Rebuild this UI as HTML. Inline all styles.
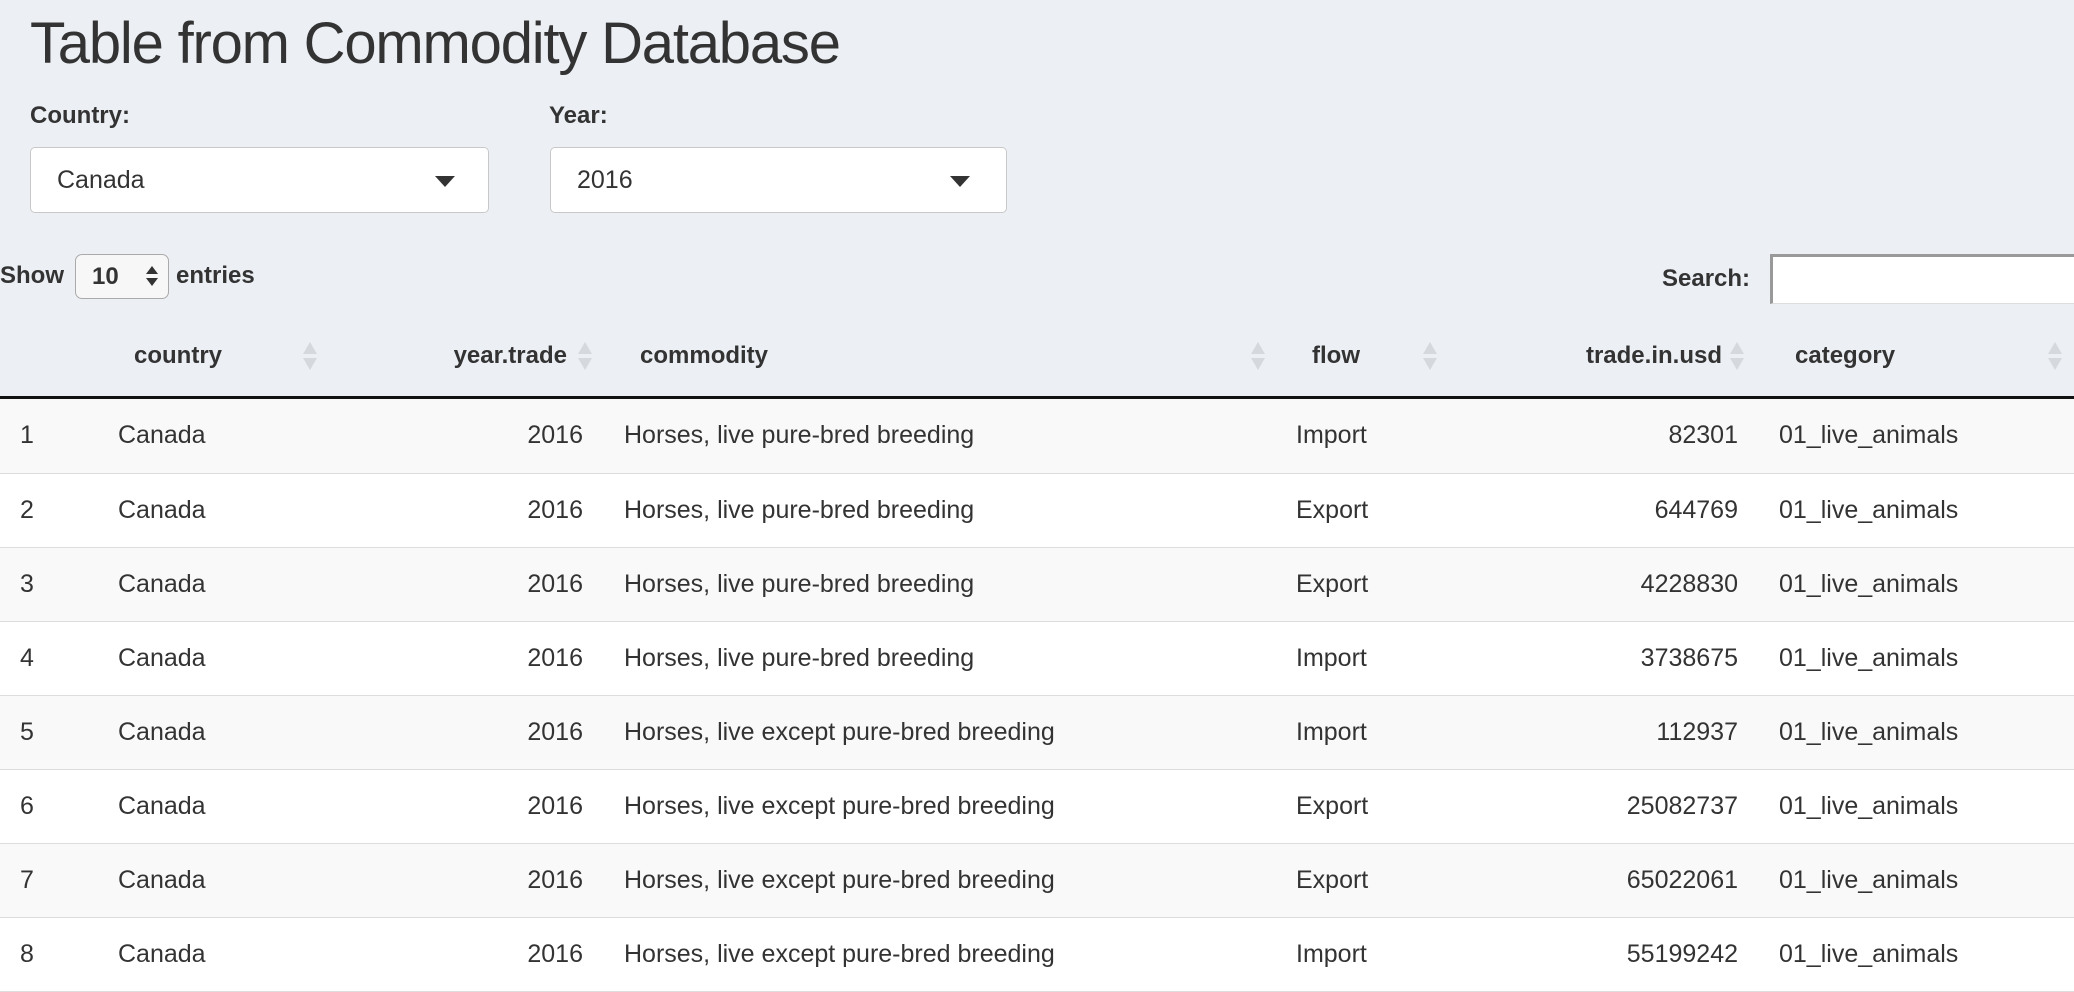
<!DOCTYPE html>
<html><head><meta charset="utf-8"><style>
*{box-sizing:border-box;margin:0;padding:0}
body{width:2074px;height:992px;overflow:hidden;background:#ecf0f5;font-family:"Liberation Sans",sans-serif;color:#333;position:relative}
.a{position:absolute;white-space:nowrap}
h1{position:absolute;left:30px;top:8px;font-size:58px;font-weight:normal;letter-spacing:-1.2px;color:#333;line-height:72px}
.lbl{font-weight:bold;font-size:24px}
.sel{position:absolute;background:#fff;border:1px solid #c8c8c8;border-radius:5px;height:66px;top:147px}
.sel span{position:absolute;left:26px;top:18px;font-size:25px}
.tri{position:absolute;top:28px;width:0;height:0;border-left:10px solid transparent;border-right:10px solid transparent;border-top:11px solid #333}
.srt{position:absolute;top:342px;width:14px;height:30px}
.srt:before{content:"";position:absolute;left:0;top:0;border-left:7px solid transparent;border-right:7px solid transparent;border-bottom:12px solid #d5d8dc}
.srt:after{content:"";position:absolute;left:0;top:16px;border-left:7px solid transparent;border-right:7px solid transparent;border-top:12px solid #d5d8dc}
.hd{position:absolute;top:340px;font-weight:bold;font-size:24px;line-height:32px}
table{position:absolute;left:0;top:399px;width:2074px;border-collapse:collapse;table-layout:fixed;font-size:25px}
td{height:74px;border-bottom:1px solid #ddd;padding:0;white-space:nowrap}
tr:nth-child(odd){background:#f9f9f9}
tr:nth-child(even){background:#fff}
.r{text-align:right}
</style></head><body>
<h1>Table from Commodity Database</h1>
<div class="a lbl" style="left:30px;top:102px">Country:</div>
<div class="a lbl" style="left:549px;top:102px">Year:</div>
<div class="sel" style="left:30px;width:459px"><span>Canada</span><div class="tri" style="left:404px"></div></div>
<div class="sel" style="left:550px;width:457px"><span>2016</span><div class="tri" style="left:399px"></div></div>

<div class="a lbl" style="left:0;top:262px">Show</div>
<div class="a" style="left:75px;top:254px;width:94px;height:45px;background:#f7f7f7;border:1px solid #aaa;border-radius:7px;font-size:24px;font-weight:bold">
<span style="position:absolute;left:16px;top:8px">10</span>
<span style="position:absolute;left:70px;top:11px;border-left:6px solid transparent;border-right:6px solid transparent;border-bottom:8px solid #333"></span>
<span style="position:absolute;left:70px;top:23px;border-left:6px solid transparent;border-right:6px solid transparent;border-top:8px solid #333"></span>
</div>
<div class="a lbl" style="left:176px;top:262px">entries</div>
<div class="a lbl" style="left:1662px;top:265px">Search:</div>
<div class="a" style="left:1770px;top:254px;width:310px;height:50px;background:#fff;border-top:3px solid #999;border-left:3px solid #999;border-bottom:1px solid #ddd"></div>

<div class="hd" style="left:134px">country</div><div class="srt" style="left:303px"></div>
<div class="hd" style="right:1507px">year.trade</div><div class="srt" style="left:578px"></div>
<div class="hd" style="left:640px">commodity</div><div class="srt" style="left:1251px"></div>
<div class="hd" style="left:1312px">flow</div><div class="srt" style="left:1423px"></div>
<div class="hd" style="right:352px">trade.in.usd</div><div class="srt" style="left:1730px"></div>
<div class="hd" style="left:1795px">category</div><div class="srt" style="left:2048px"></div>
<div class="a" style="left:0;top:396px;width:2074px;height:3px;background:#111"></div>

<table>
<colgroup><col style="width:105px"><col style="width:225px"><col style="width:270px"><col style="width:670px"><col style="width:180px"><col style="width:305px"><col style="width:319px"></colgroup>
<tr><td style="padding-left:20px">1</td><td style="padding-left:13px">Canada</td><td class="r" style="padding-right:17px">2016</td><td style="padding-left:24px">Horses, live pure-bred breeding</td><td style="padding-left:26px">Import</td><td class="r" style="padding-right:17px">82301</td><td style="padding-left:24px">01_live_animals</td></tr>
<tr><td style="padding-left:20px">2</td><td style="padding-left:13px">Canada</td><td class="r" style="padding-right:17px">2016</td><td style="padding-left:24px">Horses, live pure-bred breeding</td><td style="padding-left:26px">Export</td><td class="r" style="padding-right:17px">644769</td><td style="padding-left:24px">01_live_animals</td></tr>
<tr><td style="padding-left:20px">3</td><td style="padding-left:13px">Canada</td><td class="r" style="padding-right:17px">2016</td><td style="padding-left:24px">Horses, live pure-bred breeding</td><td style="padding-left:26px">Export</td><td class="r" style="padding-right:17px">4228830</td><td style="padding-left:24px">01_live_animals</td></tr>
<tr><td style="padding-left:20px">4</td><td style="padding-left:13px">Canada</td><td class="r" style="padding-right:17px">2016</td><td style="padding-left:24px">Horses, live pure-bred breeding</td><td style="padding-left:26px">Import</td><td class="r" style="padding-right:17px">3738675</td><td style="padding-left:24px">01_live_animals</td></tr>
<tr><td style="padding-left:20px">5</td><td style="padding-left:13px">Canada</td><td class="r" style="padding-right:17px">2016</td><td style="padding-left:24px">Horses, live except pure-bred breeding</td><td style="padding-left:26px">Import</td><td class="r" style="padding-right:17px">112937</td><td style="padding-left:24px">01_live_animals</td></tr>
<tr><td style="padding-left:20px">6</td><td style="padding-left:13px">Canada</td><td class="r" style="padding-right:17px">2016</td><td style="padding-left:24px">Horses, live except pure-bred breeding</td><td style="padding-left:26px">Export</td><td class="r" style="padding-right:17px">25082737</td><td style="padding-left:24px">01_live_animals</td></tr>
<tr><td style="padding-left:20px">7</td><td style="padding-left:13px">Canada</td><td class="r" style="padding-right:17px">2016</td><td style="padding-left:24px">Horses, live except pure-bred breeding</td><td style="padding-left:26px">Export</td><td class="r" style="padding-right:17px">65022061</td><td style="padding-left:24px">01_live_animals</td></tr>
<tr><td style="padding-left:20px">8</td><td style="padding-left:13px">Canada</td><td class="r" style="padding-right:17px">2016</td><td style="padding-left:24px">Horses, live except pure-bred breeding</td><td style="padding-left:26px">Import</td><td class="r" style="padding-right:17px">55199242</td><td style="padding-left:24px">01_live_animals</td></tr>
</table>
</body></html>
